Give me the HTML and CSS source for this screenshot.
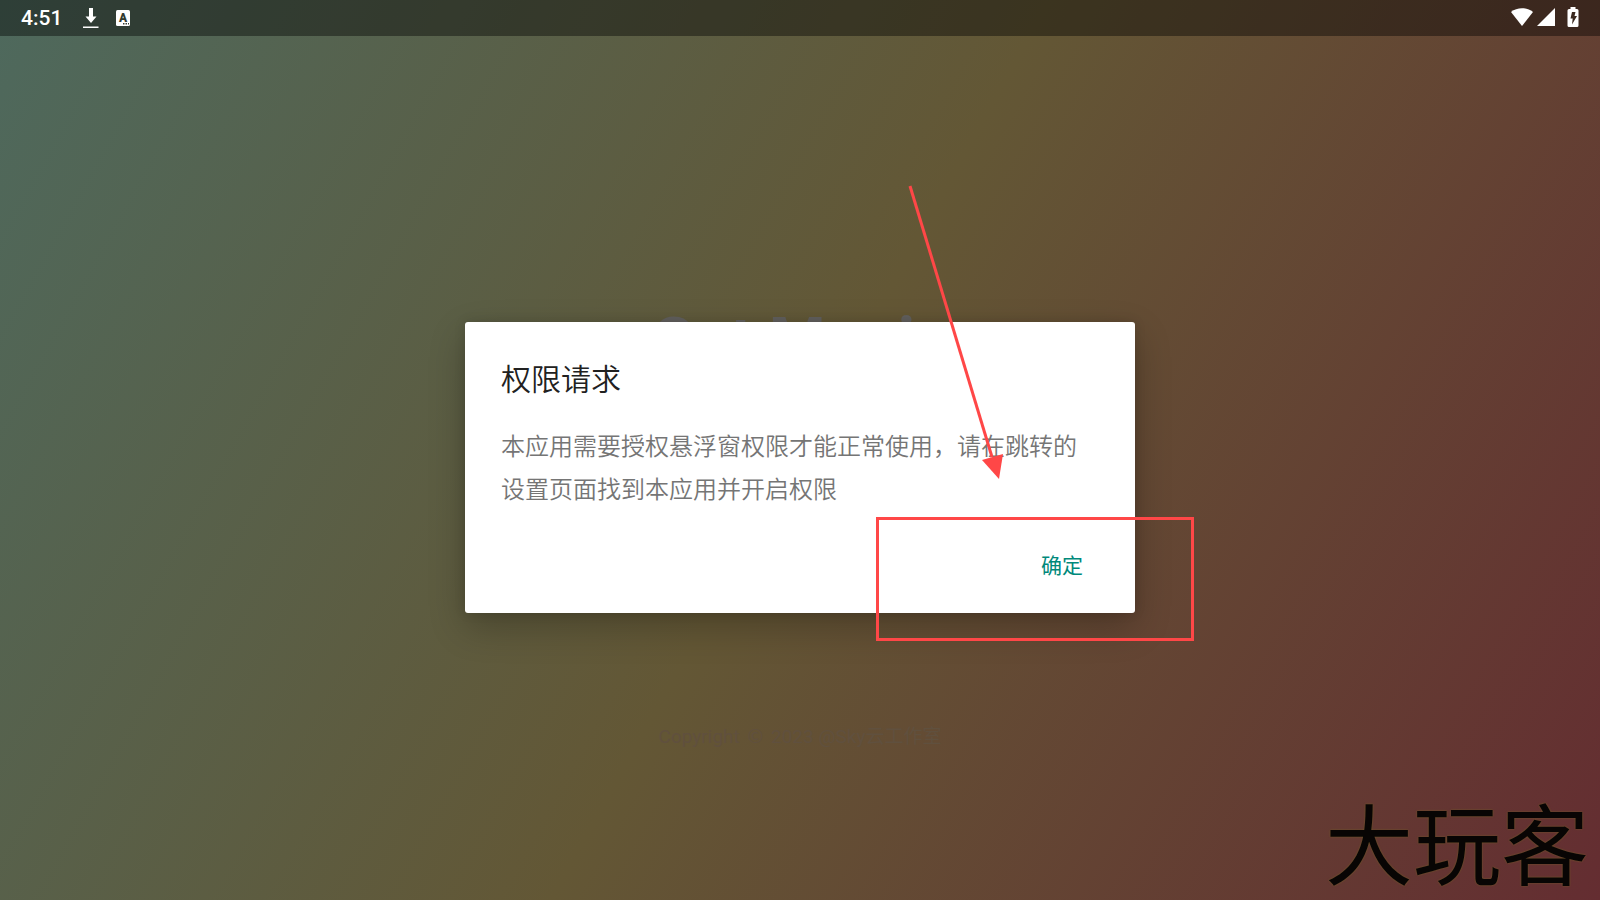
FILE: index.html
```html
<!DOCTYPE html>
<html lang="zh-CN">
<head>
<meta charset="utf-8">
<meta name="viewport" content="width=device-width, initial-scale=1">
<title>权限请求</title>
<link rel="stylesheet" href="styles.css">
</head>
<body>
<div class="screen">
  <header class="status">
    <div class="status-left">
      <time class="clock">4:51</time>
      <svg class="icon-download" width="16" height="22" viewBox="0 0 16 22" fill="#fff" aria-hidden="true"><path d="M6 1h4v8.500h3.500L8 16 2.500 9.500H6zM0 19.500h15.500v1.500H0z"/></svg>
      <svg class="icon-app" width="16" height="18" viewBox="0 0 16 18" aria-hidden="true"><rect x="1" y="1" width="14" height="16" rx="1.500" fill="#fff"/><text class="app-letter" x="8" y="13" text-anchor="middle">A</text><path d="M8 14h1.500v1.500H8zM10.500 14H12v1.500h-1.500zM13 14h1v1.500h-1z" fill="#333c31"/></svg>
    </div>
    <div class="status-right">
      <svg width="22" height="20" viewBox="0 0 22 20" fill="#fff" aria-hidden="true"><path d="M0 5C6 0 16 0 22 5L11 19z"/></svg>
      <svg class="icon-signal" width="18" height="18" viewBox="0 0 18 18" fill="#fff" aria-hidden="true"><path d="M18 0v18H0z"/></svg>
      <svg class="icon-battery" width="12" height="20" viewBox="0 0 12 20" aria-hidden="true"><path d="M3.500 0h5v2H10q1.500 0 1.500 1.500v15q0 1.500-1.500 1.500H2Q.5 20 .5 18.500v-15Q.5 2 2 2h1.500z" fill="#fff"/><path d="M5 5h3.500L7.500 9H10l-5 8.500.700-6H3.500z" fill="#3b291f"/></svg>
    </div>
  </header>
  <main class="stage">
    <div class="splash">
      <h1 class="brand">Get Magic</h1>
      <p class="copyright">Copyright <span class="mark">©</span> 2023 @Sky云工作室</p>
    </div>
    <section class="dialog" role="dialog" aria-labelledby="dialog-title">
      <h2 class="title" id="dialog-title">权限请求</h2>
      <p class="message">本应用需要授权悬浮窗权限才能正常使用，请在跳转的设置页面找到本应用并开启权限</p>
      <div class="actions"><button class="confirm" type="button">确定</button></div>
      <svg class="arrow" width="100" height="300" viewBox="0 0 100 300" aria-hidden="true"><path d="M5 4 87 275" stroke="#ff4747" stroke-width="3"/><path d="M94 297 77 278 98 272z" fill="#ff4747"/></svg>
      <div class="highlight"></div>
    </section>
  </main>
  <div class="watermark">大玩客</div>
</div>
</body>
</html>
```
FILE: styles.css
```css
* { box-sizing: border-box; }

body {
  margin: 0;
  font-family: Roboto, "Noto Sans CJK SC", sans-serif;
}

.screen {
  position: relative;
  display: flex;
  flex-direction: column;
  min-height: 100vh;
  background: linear-gradient(119deg, #4e695d 0%, #635735 50%, #642d31 100%);
}

.status {
  display: flex;
  align-items: center;
  justify-content: space-between;
  height: 36px;
  padding: 0 21px;
  background: rgba(0, 0, 0, 0.4);
}

.status-left,
.status-right {
  display: flex;
  align-items: center;
}

.status-right { padding-bottom: 2px; }

.clock {
  margin-right: 21px;
  color: #fff;
  font-size: 21px;
  font-weight: 500;
  line-height: 36px;
}

.icon-app { margin-left: 16px; }

.app-letter {
  font: 900 12px Roboto, sans-serif;
  fill: #333c31;
}

.icon-signal { margin-left: 4px; }
.icon-battery { margin-left: 12px; }

.stage {
  display: grid;
  flex: 1;
  place-items: center;
  padding-bottom: 2px;
}

.splash,
.dialog { grid-area: 1 / 1; }

.splash {
  display: flex;
  flex-direction: column;
  align-items: center;
  justify-content: space-between;
  height: 450px;
  margin-top: 122px;
}

.brand {
  margin: 0;
  color: #62605e;
  font-size: 65px;
  font-weight: 700;
  line-height: 76px;
}

.copyright {
  margin: 0;
  color: #60503e;
  font-size: 19px;
  line-height: 32px;
}

.mark {
  margin: 0 3px;
  font-family: "Noto Sans CJK SC", sans-serif;
}

.dialog {
  position: relative;
  width: 670px;
  max-width: 100%;
  padding: 33px 36px 22px;
  border-radius: 3px;
  background: #fff;
  box-shadow: 0 14px 36px rgba(0, 0, 0, 0.24), 0 0 12px rgba(0, 0, 0, 0.12);
}

.title {
  margin: 0 0 24px;
  color: #212121;
  font-family: "Noto Sans CJK SC", sans-serif;
  font-size: 30px;
  font-weight: 350;
  line-height: 44px;
}

.message {
  margin: 0;
  color: #757575;
  font-family: "Noto Sans CJK SC", sans-serif;
  font-size: 24px;
  font-weight: 350;
  line-height: 43px;
}

.actions {
  display: flex;
  justify-content: flex-end;
  margin-top: 28px;
}

.confirm {
  height: 54px;
  padding: 0 16px;
  border: 0;
  background: none;
  color: #00897b;
  font: 400 21px "Noto Sans CJK SC", sans-serif;
}

.arrow {
  position: absolute;
  top: -140px;
  left: 440px;
}

.highlight {
  position: absolute;
  top: 195px;
  left: 411px;
  width: 318px;
  height: 124px;
  border: 3px solid #ff4747;
}

.watermark {
  position: absolute;
  right: 11px;
  bottom: 0;
  color: #080504;
  font-family: "Noto Sans CJK SC", sans-serif;
  font-size: 88px;
  line-height: 120px;
  text-shadow: 0 0 2px #756026;
}
```
